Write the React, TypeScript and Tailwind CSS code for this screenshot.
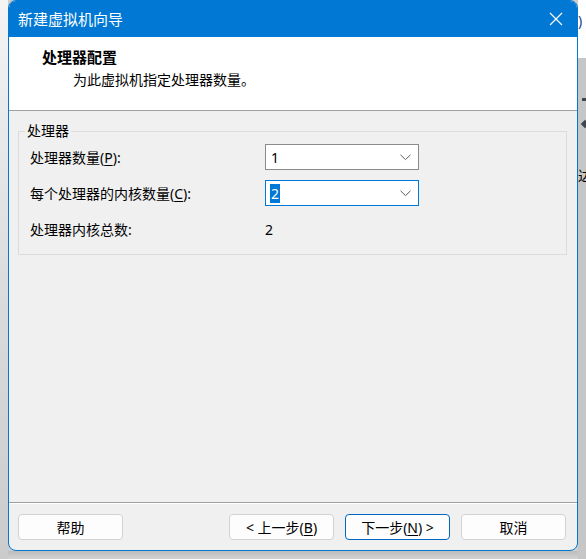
import React from 'react';

const FONT = { fontFamily: '"Noto Sans", "Noto Sans CJK SC", sans-serif' };

const Chevron = () => (
  <svg width="11" height="7" viewBox="0 0 11 7" className="shrink-0">
    <path d="M0.5 0.8 L5.5 5.6 L10.5 0.8" fill="none" stroke="#5c5c5c" strokeWidth="1" />
  </svg>
);

const Combo = ({ value, focused }: { value: string; focused?: boolean }) => (
  <div
    className={
      'w-[154px] h-[26px] bg-white border flex items-center justify-between pl-[4px] pr-[7px] ' +
      (focused ? 'border-[#0078d7]' : 'border-[#8a8a8a]')
    }
  >
    {focused ? (
      <span className="bg-[#0078d7] text-white h-[19px] leading-[19px] px-[1px]">{value}</span>
    ) : (
      <span className="px-[1px]">{value}</span>
    )}
    <Chevron />
  </div>
);

const Key = ({ k }: { k: string }) => <span className="underline underline-offset-2">{k}</span>;

const Btn = ({ children, primary }: { children: React.ReactNode; primary?: boolean }) => (
  <button
    className={
      'w-[105px] h-[26px] rounded-[4px] border bg-[#fdfdfd] text-[14px] text-black flex items-center justify-center ' +
      (primary ? 'border-[#0067c0]' : 'border-[#d2d2d2]')
    }
  >
    {children}
  </button>
);

export default function App() {
  return (
    <div className="w-[586px] h-[559px] flex overflow-hidden bg-[#cdcdcd] text-black" style={FONT}>
      {/* left backdrop */}
      <div className="w-[8px] h-full bg-gradient-to-b from-[#f4f4f4] via-[#dcdcdc] to-[#cbcbcb]" />

      {/* dialog */}
      <div className="w-[570px] flex flex-col">
        <div className="h-[551px] flex flex-col border border-[#0078d4] rounded-[8px] overflow-hidden bg-[#f0f0f0]">
          {/* title bar */}
          <div className="h-[36px] shrink-0 bg-[#0078d4] flex items-center justify-between pl-[9px]">
            <span className="text-white text-[15px] leading-none">新建虚拟机向导</span>
            <div className="w-[42px] h-full flex items-center justify-center">
              <svg width="14" height="14" viewBox="0 0 14 14">
                <path d="M1 1 L13 13 M13 1 L1 13" stroke="white" strokeWidth="1.2" />
              </svg>
            </div>
          </div>

          {/* header */}
          <div className="h-[74px] shrink-0 bg-white border-b border-[#a0a0a0] pt-[10px]">
            <div className="pl-[33px] text-[15px] font-bold leading-[20px]">处理器配置</div>
            <div className="pl-[64px] mt-[3px] text-[14px] leading-[20px]">为此虚拟机指定处理器数量。</div>
          </div>

          {/* body */}
          <div className="flex-1 flex flex-col text-[14px]">
            <fieldset className="ml-[9px] mr-[10px] mt-[11px] border border-[#dcdcdc] pl-[11px] pb-[12px] pt-[4px]">
              <legend className="-ml-[5px] px-[2px] leading-[18px]">处理器</legend>
              <div className="flex flex-col gap-[10px]">
                <div className="flex items-center h-[26px]">
                  <span className="w-[235px]">
                    处理器数量(<Key k="P" />):
                  </span>
                  <Combo value="1" />
                </div>
                <div className="flex items-center h-[26px]">
                  <span className="w-[235px]">
                    每个处理器的内核数量(<Key k="C" />):
                  </span>
                  <Combo value="2" focused />
                </div>
                <div className="flex items-center h-[26px]">
                  <span className="w-[235px]">处理器内核总数:</span>
                  <span>2</span>
                </div>
              </div>
            </fieldset>

            <div className="flex-1" />

            {/* footer */}
            <div className="border-t border-[#a0a0a0]">
              <div className="border-t border-white pt-[10px] pb-[10px] pl-[9px] pr-[11px] flex items-center justify-between">
                <Btn>帮助</Btn>
                <div className="flex gap-[11px]">
                  <Btn>
                    &lt; 上一步(<Key k="B" />)
                  </Btn>
                  <Btn primary>
                    下一步(<Key k="N" />) &gt;
                  </Btn>
                  <Btn>取消</Btn>
                </div>
              </div>
            </div>
          </div>
        </div>
        <div className="flex-1 bg-gradient-to-b from-[#bdbdbd] to-[#d2d2d2]" />
      </div>

      {/* right backdrop (another window peeking out) */}
      <div className="w-[8px] h-full flex flex-col">
        <div className="h-[58px] bg-white flex items-start pt-[14px]">
          <span className="text-[#1f3c88] text-[14px] leading-none">)</span>
        </div>
        <div className="flex-1 bg-[#c6c6c6] flex flex-col items-end pt-[40px] gap-[20px] overflow-hidden">
          <div className="w-[4px] h-[3px] bg-[#40464f]" />
          <div className="w-[6px] h-[6px] bg-[#40464f] rotate-45 mr-[-2px]" />
          <span className="text-[14px] leading-none text-black mr-[-6px] mt-[22px]">达</span>
        </div>
      </div>
    </div>
  );
}
